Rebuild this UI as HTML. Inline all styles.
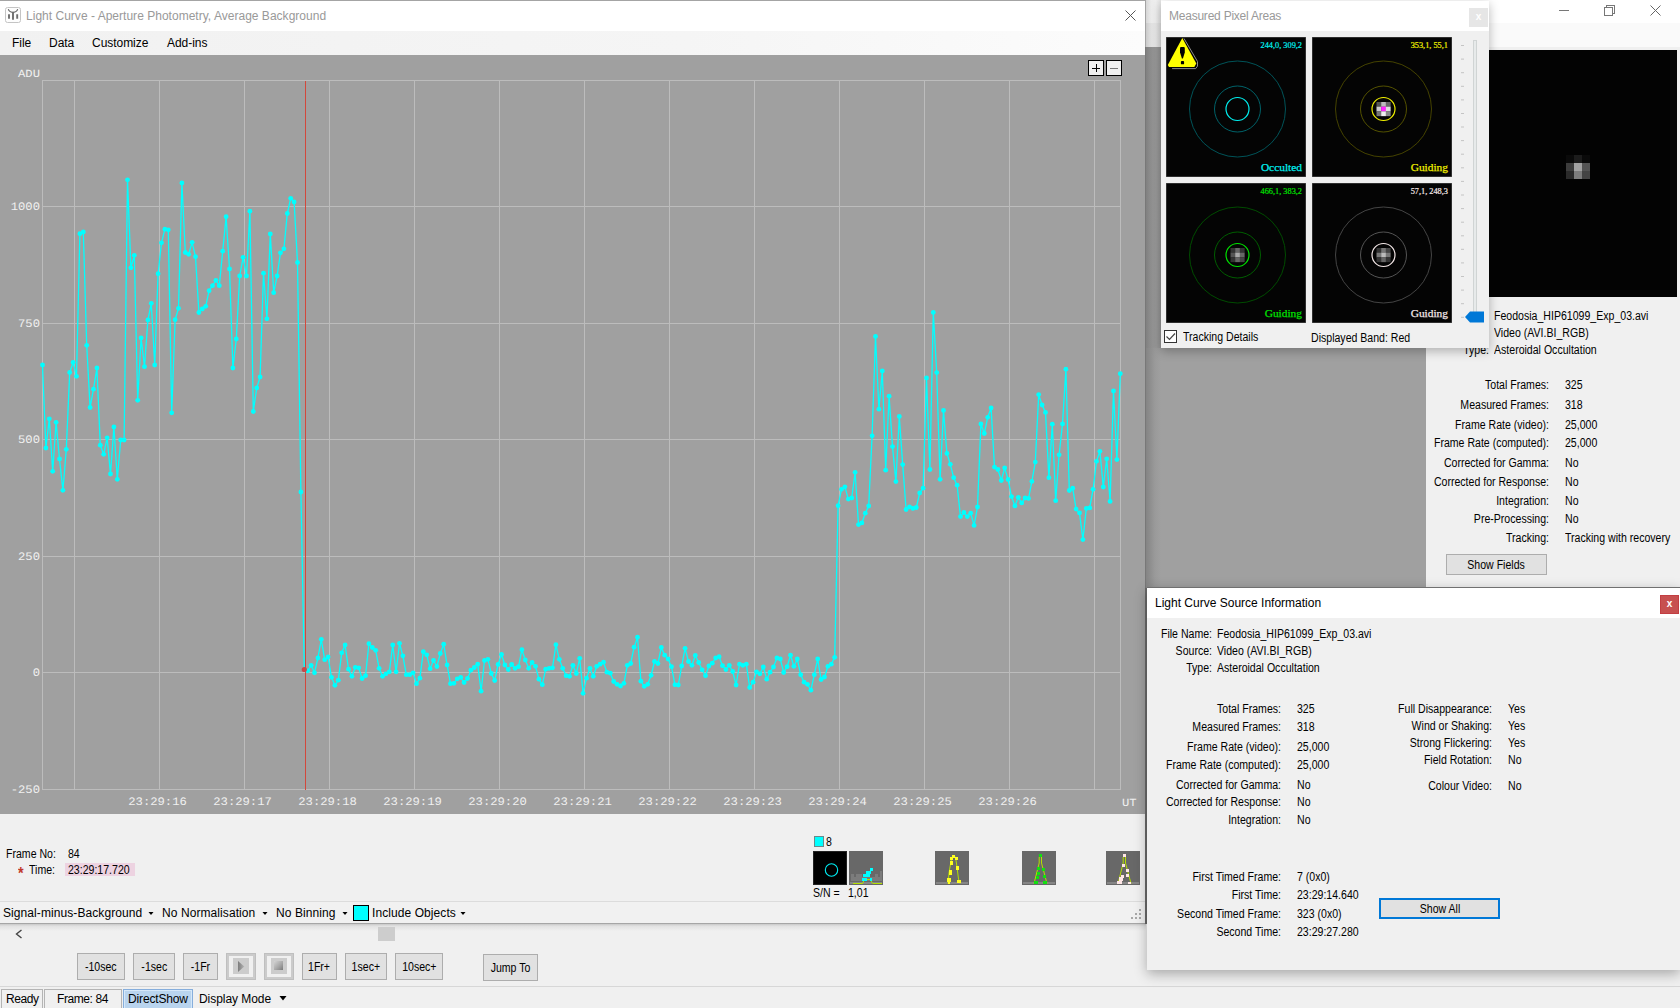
<!DOCTYPE html><html><head><meta charset="utf-8"><title>Light Curve</title><style>
*{box-sizing:border-box;margin:0;padding:0}
html,body{width:1680px;height:1008px;overflow:hidden;background:#f0f0f0}
body{position:relative;font-family:"Liberation Sans",sans-serif;font-size:12.5px;color:#000;line-height:15px}
.a{position:absolute;white-space:nowrap;transform:scaleX(.845);transform-origin:0 0}
.r{position:absolute;white-space:nowrap;text-align:right;transform:scaleX(.845);transform-origin:100% 0}
.ui{font-size:12px;line-height:15px;letter-spacing:-0.15px;transform:none}
.btn span{display:inline-block;transform:scaleX(.845)}
.mono{font-family:"Liberation Mono",monospace;text-rendering:geometricPrecision;font-size:12.2px;line-height:14px;fill:#f0f0f0}
.serif{font-family:"Liberation Serif",serif}
.btn{position:absolute;background:#e1e1e1;border:1px solid #adadad;text-align:center;white-space:nowrap}
.box{position:absolute}
</style></head><body>
<div class="box" style="left:1145px;top:0;width:535px;height:23px;background:#fff"></div>
<div class="box" style="left:1145px;top:23px;width:535px;height:24px;background:#fafafa"></div>
<div class="box" style="left:1145px;top:47px;width:535px;height:3px;background:#f0f0f0"></div>
<div class="box" style="left:1145px;top:47px;width:281px;height:541px;background:#a0a0a0"></div>
<div class="box" style="left:1426px;top:47px;width:254px;height:541px;background:#f0f0f0"></div>
<div class="box" style="left:1489px;top:50px;width:188px;height:247px;background:#030303"></div>
<div class="box" style="left:1566px;top:155px;width:8px;height:8px;background:#0a0a0a"></div>
<div class="box" style="left:1574px;top:155px;width:8px;height:8px;background:#1c1c1c"></div>
<div class="box" style="left:1582px;top:155px;width:8px;height:8px;background:#0a0a0a"></div>
<div class="box" style="left:1566px;top:163px;width:8px;height:8px;background:#3c3c3c"></div>
<div class="box" style="left:1574px;top:163px;width:8px;height:8px;background:#a2a2a2"></div>
<div class="box" style="left:1582px;top:163px;width:8px;height:8px;background:#545454"></div>
<div class="box" style="left:1566px;top:171px;width:8px;height:8px;background:#2a2a2a"></div>
<div class="box" style="left:1574px;top:171px;width:8px;height:8px;background:#7c7c7c"></div>
<div class="box" style="left:1582px;top:171px;width:8px;height:8px;background:#444"></div>
<svg class="box" style="left:1540px;top:0" width="140" height="23" viewBox="0 0 140 23" fill="none" stroke="#777" stroke-width="1" shape-rendering="crispEdges">
<path d="M19 10.5h10"/><path d="M64.5 7.5h8v8h-8z"/><path d="M66.5 7.5v-2h8v8h-2"/></svg>
<svg class="box" style="left:1650px;top:5px" width="11" height="11" viewBox="0 0 11 11" stroke="#666" stroke-width="1"><path d="M0.5 0.5l10 10M10.5 0.5l-10 10"/></svg>
<div class="a" style="left:1494px;top:309px">Feodosia_HIP61099_Exp_03.avi</div>
<div class="a" style="left:1494px;top:326px">Video (AVI.BI_RGB)</div>
<div class="r" style="left:1189px;width:300px;top:343px">Type:</div>
<div class="a" style="left:1494px;top:343px">Asteroidal Occultation</div>
<div class="r" style="left:1249px;width:300px;top:378px">Total Frames:</div>
<div class="a" style="left:1565px;top:378px">325</div>
<div class="r" style="left:1249px;width:300px;top:398px">Measured Frames:</div>
<div class="a" style="left:1565px;top:398px">318</div>
<div class="r" style="left:1249px;width:300px;top:418px">Frame Rate (video):</div>
<div class="a" style="left:1565px;top:418px">25,000</div>
<div class="r" style="left:1249px;width:300px;top:436px">Frame Rate (computed):</div>
<div class="a" style="left:1565px;top:436px">25,000</div>
<div class="r" style="left:1249px;width:300px;top:456px">Corrected for Gamma:</div>
<div class="a" style="left:1565px;top:456px">No</div>
<div class="r" style="left:1249px;width:300px;top:475px">Corrected for Response:</div>
<div class="a" style="left:1565px;top:475px">No</div>
<div class="r" style="left:1249px;width:300px;top:494px">Integration:</div>
<div class="a" style="left:1565px;top:494px">No</div>
<div class="r" style="left:1249px;width:300px;top:512px">Pre-Processing:</div>
<div class="a" style="left:1565px;top:512px">No</div>
<div class="r" style="left:1249px;width:300px;top:531px">Tracking:</div>
<div class="a" style="left:1565px;top:531px">Tracking with recovery</div>
<div class="btn" style="left:1446px;top:554px;width:101px;height:21px;line-height:21px"><span>Show Fields</span></div>
<div class="box" style="left:0;top:923px;width:1680px;height:85px;background:#f0f0f0"></div>
<div class="box" style="left:0;top:923px;width:1146px;height:8px;background:linear-gradient(#bdbdbd,#e2e2e2 40%,#f0f0f0)"></div>
<svg class="box" style="left:15px;top:929px" width="8" height="10" viewBox="0 0 8 10" fill="none" stroke="#444" stroke-width="1.4"><path d="M6.5 1L1.5 5l5 4"/></svg>
<div class="box" style="left:378px;top:927px;width:17px;height:14px;background:#cdcdcd"></div>
<div class="btn" style="left:77px;top:953px;width:48px;height:27px;line-height:27px"><span>-10sec</span></div>
<div class="btn" style="left:133px;top:953px;width:42px;height:27px;line-height:27px"><span>-1sec</span></div>
<div class="btn" style="left:183px;top:953px;width:35px;height:27px;line-height:27px"><span>-1Fr</span></div>
<div class="btn" style="left:226px;top:953px;width:30px;height:27px;line-height:27px"><span></span></div>
<div class="btn" style="left:264px;top:953px;width:30px;height:27px;line-height:27px"><span></span></div>
<div class="btn" style="left:302px;top:953px;width:35px;height:27px;line-height:27px"><span>1Fr+</span></div>
<div class="btn" style="left:345px;top:953px;width:42px;height:27px;line-height:27px"><span>1sec+</span></div>
<div class="btn" style="left:395px;top:953px;width:48px;height:27px;line-height:27px"><span>10sec+</span></div>
<div class="box" style="left:226px;top:953px;width:30px;height:27px;background:#f0f0f0;border:3px solid #cbcbcb;outline:1px solid #bfbfbf;outline-offset:-1px"></div>
<div class="box" style="left:233px;top:958px;width:16px;height:16px;background:#cccccc"></div>
<div class="box" style="left:264px;top:953px;width:30px;height:27px;background:#f0f0f0;border:3px solid #cbcbcb;outline:1px solid #bfbfbf;outline-offset:-1px"></div>
<div class="box" style="left:271px;top:958px;width:16px;height:16px;background:#cccccc"></div>
<svg class="box" style="left:237px;top:960px" width="9" height="13" viewBox="0 0 9 13"><defs><linearGradient id="pg" x1="0" y1="0" x2="1" y2="0"><stop offset="0" stop-color="#7c7c7c"/><stop offset="1" stop-color="#b4b4b4"/></linearGradient></defs><path d="M1 1v11l6.3-5.5z" fill="url(#pg)"/></svg>
<div class="box" style="left:274px;top:961px;width:9px;height:9px;background:linear-gradient(135deg,#d4d4d4,#a8a8a8 55%,#7a7a7a)"></div>
<div class="btn" style="left:483px;top:954px;width:55px;height:27px;line-height:27px"><span>Jump To</span></div>
<div class="box" style="left:0;top:986px;width:1680px;height:1px;background:#d7d7d7"></div>
<div class="box" style="left:1px;top:989px;width:42px;height:19px;border:1px solid #b4b4b4;border-bottom:none"></div>
<div class="a ui" style="left:6px;top:992px;letter-spacing:-0.45px">Ready</div>
<div class="box" style="left:44px;top:989px;width:78px;height:19px;border:1px solid #b4b4b4;border-bottom:none"></div>
<div class="a ui" style="left:57px;top:992px;letter-spacing:-0.42px">Frame: 84</div>
<div class="box" style="left:123px;top:989px;width:70px;height:19px;background:#b9d4ee;border:1px solid #86aedc;border-bottom:none;box-shadow:inset 0 1px 0 #d6e8f9,inset 1px 0 0 #d6e8f9,inset -1px 0 0 #d6e8f9"></div>
<div class="a ui" style="left:128px;top:992px">DirectShow</div>
<div class="a ui" style="left:199px;top:992px;letter-spacing:-0.05px">Display Mode</div>
<svg class="box" style="left:279px;top:996px" width="9" height="5"><path d="M0.5 0h7L4 4.5z" fill="#000"/></svg>
<div class="box" style="left:1146px;top:0;width:15px;height:23px;background:linear-gradient(to right,#d6d6d6,#ececec 35%,#f0f0f0 65%,#e6e6e6)"></div>
<div class="box" style="left:1146px;top:23px;width:15px;height:24px;background:linear-gradient(to right,#cacaca,#e2e2e2 35%,#e8e8e8 65%,#dedede)"></div>
<div class="box" style="left:1146px;top:47px;width:15px;height:301px;background:linear-gradient(to right,#808080,#929292 40%,#989898 70%,#949494)"></div>
<div class="box" style="left:1146px;top:348px;width:15px;height:240px;background:linear-gradient(to right,#848484,#9a9a9a 60%,#a0a0a0)"></div>
<div class="box" style="left:1145px;top:0;width:1px;height:47px;background:#a4a4a4"></div>
<div class="box" style="left:1145px;top:47px;width:1px;height:541px;background:#787878"></div>
<div class="box" style="left:1145px;top:588px;width:2px;height:336px;background:#6a6a6a"></div>
<div class="box" style="left:0;top:0;width:1145px;height:924px;background:#f0f0f0;border-top:1px solid #a4a4a4;border-bottom:1px solid #a6a6a6"></div>
<div class="box" style="left:0;top:1px;width:1145px;height:30px;background:#fff"></div>
<svg class="box" style="left:5px;top:7px" width="16" height="16" viewBox="0 0 16 16"><rect x="0.5" y="0.5" width="15" height="15" rx="2" fill="#fdfdfd" stroke="#c4c4c4"/><path d="M8 4.8v8M4 7.2v4.6M12.2 7.2v4.6" stroke="#6e6e6e" stroke-width="1.9" fill="none"/><path d="M3.3 2.2Q4 5 8 5.6Q12 5 12.7 2.2" stroke="#6e6e6e" stroke-width="1.1" fill="none"/></svg>
<div class="a ui" style="left:26px;top:9px;color:#999;letter-spacing:0.02px">Light Curve - Aperture Photometry, Average Background</div>
<svg class="box" style="left:1125px;top:10px" width="11" height="11" viewBox="0 0 11 11" stroke="#555" stroke-width="1"><path d="M0.5 0.5l10 10M10.5 0.5l-10 10"/></svg>
<div class="box" style="left:0;top:31px;width:1145px;height:24px;background:linear-gradient(to right,#f1f1f1,#f5f5f5 60%,#fcfcfc)"></div>
<div class="a ui" style="left:12px;top:36px;letter-spacing:-0.04px">File</div>
<div class="a ui" style="left:49px;top:36px;letter-spacing:-0.04px">Data</div>
<div class="a ui" style="left:92px;top:36px;letter-spacing:-0.04px">Customize</div>
<div class="a ui" style="left:167px;top:36px;letter-spacing:-0.04px">Add-ins</div>
<svg class="box" style="left:0;top:55px" width="1145" height="759" viewBox="0 55 1145 759"><rect x="0" y="55" width="1145" height="759" fill="#a0a0a0"/><path d="M74.5 80.5V789.5 M159.5 80.5V789.5 M244.5 80.5V789.5 M329.5 80.5V789.5 M414.5 80.5V789.5 M499.5 80.5V789.5 M584.5 80.5V789.5 M669.5 80.5V789.5 M754.5 80.5V789.5 M839.5 80.5V789.5 M924.5 80.5V789.5 M1009.5 80.5V789.5 M1094.5 80.5V789.5 M42.5 206.5H1120.5 M42.5 323H1120.5 M42.5 439.5H1120.5 M42.5 556H1120.5 M42.5 672.5H1120.5 M42.5 80.5H1120.5V789.5H42.5Z" fill="none" stroke="#bcbcbc" stroke-width="1" shape-rendering="crispEdges"/><path d="M305.5 80.5V789.5" stroke="#d2483c" stroke-width="1.3" shape-rendering="crispEdges"/><text class="mono" transform="translate(18,77) scale(1,0.89)" text-anchor="start">ADU</text><text class="mono" transform="translate(40,210.1) scale(1,0.94)" text-anchor="end">1000</text><text class="mono" transform="translate(40,326.6) scale(1,0.94)" text-anchor="end">750</text><text class="mono" transform="translate(40,443.1) scale(1,0.94)" text-anchor="end">500</text><text class="mono" transform="translate(40,559.6) scale(1,0.94)" text-anchor="end">250</text><text class="mono" transform="translate(40,676.1) scale(1,0.94)" text-anchor="end">0</text><text class="mono" transform="translate(40,792.6) scale(1,0.94)" text-anchor="end">-250</text><text class="mono" transform="translate(157.5,805.1) scale(1,0.94)" text-anchor="middle">23:29:16</text><text class="mono" transform="translate(242.5,805.1) scale(1,0.94)" text-anchor="middle">23:29:17</text><text class="mono" transform="translate(327.5,805.1) scale(1,0.94)" text-anchor="middle">23:29:18</text><text class="mono" transform="translate(412.5,805.1) scale(1,0.94)" text-anchor="middle">23:29:19</text><text class="mono" transform="translate(497.5,805.1) scale(1,0.94)" text-anchor="middle">23:29:20</text><text class="mono" transform="translate(582.5,805.1) scale(1,0.94)" text-anchor="middle">23:29:21</text><text class="mono" transform="translate(667.5,805.1) scale(1,0.94)" text-anchor="middle">23:29:22</text><text class="mono" transform="translate(752.5,805.1) scale(1,0.94)" text-anchor="middle">23:29:23</text><text class="mono" transform="translate(837.5,805.1) scale(1,0.94)" text-anchor="middle">23:29:24</text><text class="mono" transform="translate(922.5,805.1) scale(1,0.94)" text-anchor="middle">23:29:25</text><text class="mono" transform="translate(1007.5,805.1) scale(1,0.94)" text-anchor="middle">23:29:26</text><text class="mono" transform="translate(1122,806) scale(1,0.89)" text-anchor="start">UT</text><polyline points="42.5,365.0 45.9,448.0 49.3,418.8 52.7,471.3 56.1,422.3 59.5,459.0 62.9,490.3 66.3,449.3 69.7,372.5 73.1,362.5 76.5,376.3 79.9,233.7 83.3,232.0 86.7,345.3 90.1,407.5 93.5,389.2 96.9,368.0 100.3,445.2 103.7,454.3 107.1,437.8 110.5,474.0 113.9,427.0 117.3,479.3 120.7,440.0 124.1,440.0 127.5,179.8 130.9,267.8 134.3,255.3 137.7,400.3 141.1,338.0 144.5,366.7 147.9,320.0 151.3,303.3 154.7,365.0 158.1,273.7 161.5,242.8 164.9,229.2 168.3,229.8 171.7,412.8 175.1,319.7 178.5,308.3 181.9,183.0 185.3,252.5 188.7,254.3 192.1,242.3 195.5,256.7 198.9,312.5 202.3,309.0 205.7,306.3 209.1,290.7 212.5,285.7 215.9,280.3 219.3,285.7 222.7,251.2 226.1,216.7 229.5,269.0 232.9,368.0 236.3,339.0 239.7,276.0 243.1,257.3 246.5,276.0 249.9,211.2 253.3,411.5 256.7,388.0 260.1,377.0 263.5,273.2 266.9,318.8 270.3,234.0 273.7,292.7 277.1,276.0 280.5,252.8 283.9,248.8 287.3,213.5 290.7,198.3 294.1,202.0 297.5,262.5 300.9,492.0 304.3,669.5 307.7,670.8 311.1,665.3 314.5,672.8 317.9,658.0 321.3,639.3 324.7,659.7 328.1,657.0 331.5,677.3 334.9,685.3 338.3,680.2 341.7,652.8 345.1,645.0 348.5,669.2 351.9,676.3 355.3,667.3 358.7,667.8 362.1,678.5 365.5,675.7 368.9,643.7 372.3,647.5 375.7,650.3 379.1,668.3 382.5,676.3 385.9,673.8 389.3,671.8 392.7,645.0 396.1,671.8 399.5,643.3 402.9,655.8 406.3,674.7 409.7,674.7 413.1,672.8 416.5,683.7 419.9,678.2 423.3,651.7 426.7,654.8 430.1,668.7 433.5,660.5 436.9,666.5 440.3,653.5 443.7,644.2 447.1,665.0 450.5,683.7 453.9,683.3 457.3,678.8 460.7,677.3 464.1,682.5 467.5,678.5 470.9,670.2 474.3,667.5 477.7,664.2 481.1,691.2 484.5,660.5 487.9,659.3 491.3,673.5 494.7,680.5 498.1,664.5 501.5,654.5 504.9,665.0 508.3,669.5 511.7,664.5 515.1,668.3 518.5,666.7 521.9,649.7 525.3,660.0 528.7,668.3 532.1,662.5 535.5,666.3 538.9,679.2 542.3,684.7 545.7,669.2 549.1,668.3 552.5,667.8 555.9,644.7 559.3,659.3 562.7,668.3 566.1,675.7 569.5,676.3 572.9,665.3 576.3,673.5 579.7,658.3 583.1,693.3 586.5,678.2 589.9,668.3 593.3,676.3 596.7,666.3 600.1,664.2 603.5,662.2 606.9,672.2 610.3,673.2 613.7,681.5 617.1,684.3 620.5,686.0 623.9,683.3 627.3,665.3 630.7,663.5 634.1,647.2 637.5,637.2 640.9,681.2 644.3,686.3 647.7,684.3 651.1,675.3 654.5,661.5 657.9,663.5 661.3,647.5 664.7,655.2 668.1,659.0 671.5,666.7 674.9,684.7 678.3,685.0 681.7,666.0 685.1,648.3 688.5,661.5 691.9,665.3 695.3,655.5 698.7,662.5 702.1,669.8 705.5,675.7 708.9,666.0 712.3,663.2 715.7,658.0 719.1,656.7 722.5,665.7 725.9,669.5 729.3,665.3 732.7,671.5 736.1,685.0 739.5,664.2 742.9,665.3 746.3,664.2 749.7,687.5 753.1,682.2 756.5,671.8 759.9,673.8 763.3,667.0 766.7,679.2 770.1,672.2 773.5,667.0 776.9,658.0 780.3,659.0 783.7,672.5 787.1,666.7 790.5,655.2 793.9,666.3 797.3,659.0 800.7,674.7 804.1,682.2 807.5,684.3 810.9,690.2 814.3,674.7 817.7,659.0 821.1,679.5 824.5,677.0 827.9,666.3 831.3,664.2 834.7,657.3 838.1,505.7 841.5,489.3 844.9,486.8 848.3,499.1 851.7,498.0 855.1,472.3 858.5,524.6 861.9,522.9 865.3,513.2 868.7,506.0 872.1,435.8 875.5,336.4 878.9,409.2 882.3,371.0 885.7,470.2 889.1,396.2 892.5,446.6 895.9,481.6 899.3,416.5 902.7,464.6 906.1,509.5 909.5,506.8 912.9,508.4 916.3,507.5 919.7,493.0 923.1,488.2 926.5,378.0 929.9,469.5 933.3,312.4 936.7,372.6 940.1,479.3 943.5,410.5 946.9,453.4 950.3,464.3 953.7,477.7 957.1,485.2 960.5,516.6 963.9,512.5 967.3,516.6 970.7,513.2 974.1,525.4 977.5,507.0 980.9,423.9 984.3,433.5 987.7,417.3 991.1,408.0 994.5,467.1 997.9,469.5 1001.3,480.5 1004.7,467.9 1008.1,479.5 1011.5,496.6 1014.9,505.9 1018.3,497.3 1021.7,502.9 1025.1,498.0 1028.5,498.4 1031.9,481.4 1035.3,462.1 1038.7,394.6 1042.1,405.0 1045.5,412.4 1048.9,477.7 1052.3,424.2 1055.7,500.7 1059.1,454.8 1062.5,423.9 1065.9,369.2 1069.3,490.5 1072.7,488.2 1076.1,509.1 1079.5,512.9 1082.9,539.6 1086.3,508.4 1089.7,507.9 1093.1,489.3 1096.5,461.3 1099.9,451.3 1103.3,487.0 1106.7,458.8 1110.1,501.4 1113.5,391.0 1116.9,459.6 1120.3,373.7" fill="none" stroke="#00ffff" stroke-width="1.3" stroke-linejoin="round"/><g fill="#00ffff"><circle cx="42.5" cy="365.0" r="2.4"/><circle cx="45.9" cy="448.0" r="2.4"/><circle cx="49.3" cy="418.8" r="2.4"/><circle cx="52.7" cy="471.3" r="2.4"/><circle cx="56.1" cy="422.3" r="2.4"/><circle cx="59.5" cy="459.0" r="2.4"/><circle cx="62.9" cy="490.3" r="2.4"/><circle cx="66.3" cy="449.3" r="2.4"/><circle cx="69.7" cy="372.5" r="2.4"/><circle cx="73.1" cy="362.5" r="2.4"/><circle cx="76.5" cy="376.3" r="2.4"/><circle cx="79.9" cy="233.7" r="2.4"/><circle cx="83.3" cy="232.0" r="2.4"/><circle cx="86.7" cy="345.3" r="2.4"/><circle cx="90.1" cy="407.5" r="2.4"/><circle cx="93.5" cy="389.2" r="2.4"/><circle cx="96.9" cy="368.0" r="2.4"/><circle cx="100.3" cy="445.2" r="2.4"/><circle cx="103.7" cy="454.3" r="2.4"/><circle cx="107.1" cy="437.8" r="2.4"/><circle cx="110.5" cy="474.0" r="2.4"/><circle cx="113.9" cy="427.0" r="2.4"/><circle cx="117.3" cy="479.3" r="2.4"/><circle cx="120.7" cy="440.0" r="2.4"/><circle cx="124.1" cy="440.0" r="2.4"/><circle cx="127.5" cy="179.8" r="2.4"/><circle cx="130.9" cy="267.8" r="2.4"/><circle cx="134.3" cy="255.3" r="2.4"/><circle cx="137.7" cy="400.3" r="2.4"/><circle cx="141.1" cy="338.0" r="2.4"/><circle cx="144.5" cy="366.7" r="2.4"/><circle cx="147.9" cy="320.0" r="2.4"/><circle cx="151.3" cy="303.3" r="2.4"/><circle cx="154.7" cy="365.0" r="2.4"/><circle cx="158.1" cy="273.7" r="2.4"/><circle cx="161.5" cy="242.8" r="2.4"/><circle cx="164.9" cy="229.2" r="2.4"/><circle cx="168.3" cy="229.8" r="2.4"/><circle cx="171.7" cy="412.8" r="2.4"/><circle cx="175.1" cy="319.7" r="2.4"/><circle cx="178.5" cy="308.3" r="2.4"/><circle cx="181.9" cy="183.0" r="2.4"/><circle cx="185.3" cy="252.5" r="2.4"/><circle cx="188.7" cy="254.3" r="2.4"/><circle cx="192.1" cy="242.3" r="2.4"/><circle cx="195.5" cy="256.7" r="2.4"/><circle cx="198.9" cy="312.5" r="2.4"/><circle cx="202.3" cy="309.0" r="2.4"/><circle cx="205.7" cy="306.3" r="2.4"/><circle cx="209.1" cy="290.7" r="2.4"/><circle cx="212.5" cy="285.7" r="2.4"/><circle cx="215.9" cy="280.3" r="2.4"/><circle cx="219.3" cy="285.7" r="2.4"/><circle cx="222.7" cy="251.2" r="2.4"/><circle cx="226.1" cy="216.7" r="2.4"/><circle cx="229.5" cy="269.0" r="2.4"/><circle cx="232.9" cy="368.0" r="2.4"/><circle cx="236.3" cy="339.0" r="2.4"/><circle cx="239.7" cy="276.0" r="2.4"/><circle cx="243.1" cy="257.3" r="2.4"/><circle cx="246.5" cy="276.0" r="2.4"/><circle cx="249.9" cy="211.2" r="2.4"/><circle cx="253.3" cy="411.5" r="2.4"/><circle cx="256.7" cy="388.0" r="2.4"/><circle cx="260.1" cy="377.0" r="2.4"/><circle cx="263.5" cy="273.2" r="2.4"/><circle cx="266.9" cy="318.8" r="2.4"/><circle cx="270.3" cy="234.0" r="2.4"/><circle cx="273.7" cy="292.7" r="2.4"/><circle cx="277.1" cy="276.0" r="2.4"/><circle cx="280.5" cy="252.8" r="2.4"/><circle cx="283.9" cy="248.8" r="2.4"/><circle cx="287.3" cy="213.5" r="2.4"/><circle cx="290.7" cy="198.3" r="2.4"/><circle cx="294.1" cy="202.0" r="2.4"/><circle cx="297.5" cy="262.5" r="2.4"/><circle cx="300.9" cy="492.0" r="2.4"/><circle cx="307.7" cy="670.8" r="2.4"/><circle cx="311.1" cy="665.3" r="2.4"/><circle cx="314.5" cy="672.8" r="2.4"/><circle cx="317.9" cy="658.0" r="2.4"/><circle cx="321.3" cy="639.3" r="2.4"/><circle cx="324.7" cy="659.7" r="2.4"/><circle cx="328.1" cy="657.0" r="2.4"/><circle cx="331.5" cy="677.3" r="2.4"/><circle cx="334.9" cy="685.3" r="2.4"/><circle cx="338.3" cy="680.2" r="2.4"/><circle cx="341.7" cy="652.8" r="2.4"/><circle cx="345.1" cy="645.0" r="2.4"/><circle cx="348.5" cy="669.2" r="2.4"/><circle cx="351.9" cy="676.3" r="2.4"/><circle cx="355.3" cy="667.3" r="2.4"/><circle cx="358.7" cy="667.8" r="2.4"/><circle cx="362.1" cy="678.5" r="2.4"/><circle cx="365.5" cy="675.7" r="2.4"/><circle cx="368.9" cy="643.7" r="2.4"/><circle cx="372.3" cy="647.5" r="2.4"/><circle cx="375.7" cy="650.3" r="2.4"/><circle cx="379.1" cy="668.3" r="2.4"/><circle cx="382.5" cy="676.3" r="2.4"/><circle cx="385.9" cy="673.8" r="2.4"/><circle cx="389.3" cy="671.8" r="2.4"/><circle cx="392.7" cy="645.0" r="2.4"/><circle cx="396.1" cy="671.8" r="2.4"/><circle cx="399.5" cy="643.3" r="2.4"/><circle cx="402.9" cy="655.8" r="2.4"/><circle cx="406.3" cy="674.7" r="2.4"/><circle cx="409.7" cy="674.7" r="2.4"/><circle cx="413.1" cy="672.8" r="2.4"/><circle cx="416.5" cy="683.7" r="2.4"/><circle cx="419.9" cy="678.2" r="2.4"/><circle cx="423.3" cy="651.7" r="2.4"/><circle cx="426.7" cy="654.8" r="2.4"/><circle cx="430.1" cy="668.7" r="2.4"/><circle cx="433.5" cy="660.5" r="2.4"/><circle cx="436.9" cy="666.5" r="2.4"/><circle cx="440.3" cy="653.5" r="2.4"/><circle cx="443.7" cy="644.2" r="2.4"/><circle cx="447.1" cy="665.0" r="2.4"/><circle cx="450.5" cy="683.7" r="2.4"/><circle cx="453.9" cy="683.3" r="2.4"/><circle cx="457.3" cy="678.8" r="2.4"/><circle cx="460.7" cy="677.3" r="2.4"/><circle cx="464.1" cy="682.5" r="2.4"/><circle cx="467.5" cy="678.5" r="2.4"/><circle cx="470.9" cy="670.2" r="2.4"/><circle cx="474.3" cy="667.5" r="2.4"/><circle cx="477.7" cy="664.2" r="2.4"/><circle cx="481.1" cy="691.2" r="2.4"/><circle cx="484.5" cy="660.5" r="2.4"/><circle cx="487.9" cy="659.3" r="2.4"/><circle cx="491.3" cy="673.5" r="2.4"/><circle cx="494.7" cy="680.5" r="2.4"/><circle cx="498.1" cy="664.5" r="2.4"/><circle cx="501.5" cy="654.5" r="2.4"/><circle cx="504.9" cy="665.0" r="2.4"/><circle cx="508.3" cy="669.5" r="2.4"/><circle cx="511.7" cy="664.5" r="2.4"/><circle cx="515.1" cy="668.3" r="2.4"/><circle cx="518.5" cy="666.7" r="2.4"/><circle cx="521.9" cy="649.7" r="2.4"/><circle cx="525.3" cy="660.0" r="2.4"/><circle cx="528.7" cy="668.3" r="2.4"/><circle cx="532.1" cy="662.5" r="2.4"/><circle cx="535.5" cy="666.3" r="2.4"/><circle cx="538.9" cy="679.2" r="2.4"/><circle cx="542.3" cy="684.7" r="2.4"/><circle cx="545.7" cy="669.2" r="2.4"/><circle cx="549.1" cy="668.3" r="2.4"/><circle cx="552.5" cy="667.8" r="2.4"/><circle cx="555.9" cy="644.7" r="2.4"/><circle cx="559.3" cy="659.3" r="2.4"/><circle cx="562.7" cy="668.3" r="2.4"/><circle cx="566.1" cy="675.7" r="2.4"/><circle cx="569.5" cy="676.3" r="2.4"/><circle cx="572.9" cy="665.3" r="2.4"/><circle cx="576.3" cy="673.5" r="2.4"/><circle cx="579.7" cy="658.3" r="2.4"/><circle cx="583.1" cy="693.3" r="2.4"/><circle cx="586.5" cy="678.2" r="2.4"/><circle cx="589.9" cy="668.3" r="2.4"/><circle cx="593.3" cy="676.3" r="2.4"/><circle cx="596.7" cy="666.3" r="2.4"/><circle cx="600.1" cy="664.2" r="2.4"/><circle cx="603.5" cy="662.2" r="2.4"/><circle cx="606.9" cy="672.2" r="2.4"/><circle cx="610.3" cy="673.2" r="2.4"/><circle cx="613.7" cy="681.5" r="2.4"/><circle cx="617.1" cy="684.3" r="2.4"/><circle cx="620.5" cy="686.0" r="2.4"/><circle cx="623.9" cy="683.3" r="2.4"/><circle cx="627.3" cy="665.3" r="2.4"/><circle cx="630.7" cy="663.5" r="2.4"/><circle cx="634.1" cy="647.2" r="2.4"/><circle cx="637.5" cy="637.2" r="2.4"/><circle cx="640.9" cy="681.2" r="2.4"/><circle cx="644.3" cy="686.3" r="2.4"/><circle cx="647.7" cy="684.3" r="2.4"/><circle cx="651.1" cy="675.3" r="2.4"/><circle cx="654.5" cy="661.5" r="2.4"/><circle cx="657.9" cy="663.5" r="2.4"/><circle cx="661.3" cy="647.5" r="2.4"/><circle cx="664.7" cy="655.2" r="2.4"/><circle cx="668.1" cy="659.0" r="2.4"/><circle cx="671.5" cy="666.7" r="2.4"/><circle cx="674.9" cy="684.7" r="2.4"/><circle cx="678.3" cy="685.0" r="2.4"/><circle cx="681.7" cy="666.0" r="2.4"/><circle cx="685.1" cy="648.3" r="2.4"/><circle cx="688.5" cy="661.5" r="2.4"/><circle cx="691.9" cy="665.3" r="2.4"/><circle cx="695.3" cy="655.5" r="2.4"/><circle cx="698.7" cy="662.5" r="2.4"/><circle cx="702.1" cy="669.8" r="2.4"/><circle cx="705.5" cy="675.7" r="2.4"/><circle cx="708.9" cy="666.0" r="2.4"/><circle cx="712.3" cy="663.2" r="2.4"/><circle cx="715.7" cy="658.0" r="2.4"/><circle cx="719.1" cy="656.7" r="2.4"/><circle cx="722.5" cy="665.7" r="2.4"/><circle cx="725.9" cy="669.5" r="2.4"/><circle cx="729.3" cy="665.3" r="2.4"/><circle cx="732.7" cy="671.5" r="2.4"/><circle cx="736.1" cy="685.0" r="2.4"/><circle cx="739.5" cy="664.2" r="2.4"/><circle cx="742.9" cy="665.3" r="2.4"/><circle cx="746.3" cy="664.2" r="2.4"/><circle cx="749.7" cy="687.5" r="2.4"/><circle cx="753.1" cy="682.2" r="2.4"/><circle cx="756.5" cy="671.8" r="2.4"/><circle cx="759.9" cy="673.8" r="2.4"/><circle cx="763.3" cy="667.0" r="2.4"/><circle cx="766.7" cy="679.2" r="2.4"/><circle cx="770.1" cy="672.2" r="2.4"/><circle cx="773.5" cy="667.0" r="2.4"/><circle cx="776.9" cy="658.0" r="2.4"/><circle cx="780.3" cy="659.0" r="2.4"/><circle cx="783.7" cy="672.5" r="2.4"/><circle cx="787.1" cy="666.7" r="2.4"/><circle cx="790.5" cy="655.2" r="2.4"/><circle cx="793.9" cy="666.3" r="2.4"/><circle cx="797.3" cy="659.0" r="2.4"/><circle cx="800.7" cy="674.7" r="2.4"/><circle cx="804.1" cy="682.2" r="2.4"/><circle cx="807.5" cy="684.3" r="2.4"/><circle cx="810.9" cy="690.2" r="2.4"/><circle cx="814.3" cy="674.7" r="2.4"/><circle cx="817.7" cy="659.0" r="2.4"/><circle cx="821.1" cy="679.5" r="2.4"/><circle cx="824.5" cy="677.0" r="2.4"/><circle cx="827.9" cy="666.3" r="2.4"/><circle cx="831.3" cy="664.2" r="2.4"/><circle cx="834.7" cy="657.3" r="2.4"/><circle cx="838.1" cy="505.7" r="2.4"/><circle cx="841.5" cy="489.3" r="2.4"/><circle cx="844.9" cy="486.8" r="2.4"/><circle cx="848.3" cy="499.1" r="2.4"/><circle cx="851.7" cy="498.0" r="2.4"/><circle cx="855.1" cy="472.3" r="2.4"/><circle cx="858.5" cy="524.6" r="2.4"/><circle cx="861.9" cy="522.9" r="2.4"/><circle cx="865.3" cy="513.2" r="2.4"/><circle cx="868.7" cy="506.0" r="2.4"/><circle cx="872.1" cy="435.8" r="2.4"/><circle cx="875.5" cy="336.4" r="2.4"/><circle cx="878.9" cy="409.2" r="2.4"/><circle cx="882.3" cy="371.0" r="2.4"/><circle cx="885.7" cy="470.2" r="2.4"/><circle cx="889.1" cy="396.2" r="2.4"/><circle cx="892.5" cy="446.6" r="2.4"/><circle cx="895.9" cy="481.6" r="2.4"/><circle cx="899.3" cy="416.5" r="2.4"/><circle cx="902.7" cy="464.6" r="2.4"/><circle cx="906.1" cy="509.5" r="2.4"/><circle cx="909.5" cy="506.8" r="2.4"/><circle cx="912.9" cy="508.4" r="2.4"/><circle cx="916.3" cy="507.5" r="2.4"/><circle cx="919.7" cy="493.0" r="2.4"/><circle cx="923.1" cy="488.2" r="2.4"/><circle cx="926.5" cy="378.0" r="2.4"/><circle cx="929.9" cy="469.5" r="2.4"/><circle cx="933.3" cy="312.4" r="2.4"/><circle cx="936.7" cy="372.6" r="2.4"/><circle cx="940.1" cy="479.3" r="2.4"/><circle cx="943.5" cy="410.5" r="2.4"/><circle cx="946.9" cy="453.4" r="2.4"/><circle cx="950.3" cy="464.3" r="2.4"/><circle cx="953.7" cy="477.7" r="2.4"/><circle cx="957.1" cy="485.2" r="2.4"/><circle cx="960.5" cy="516.6" r="2.4"/><circle cx="963.9" cy="512.5" r="2.4"/><circle cx="967.3" cy="516.6" r="2.4"/><circle cx="970.7" cy="513.2" r="2.4"/><circle cx="974.1" cy="525.4" r="2.4"/><circle cx="977.5" cy="507.0" r="2.4"/><circle cx="980.9" cy="423.9" r="2.4"/><circle cx="984.3" cy="433.5" r="2.4"/><circle cx="987.7" cy="417.3" r="2.4"/><circle cx="991.1" cy="408.0" r="2.4"/><circle cx="994.5" cy="467.1" r="2.4"/><circle cx="997.9" cy="469.5" r="2.4"/><circle cx="1001.3" cy="480.5" r="2.4"/><circle cx="1004.7" cy="467.9" r="2.4"/><circle cx="1008.1" cy="479.5" r="2.4"/><circle cx="1011.5" cy="496.6" r="2.4"/><circle cx="1014.9" cy="505.9" r="2.4"/><circle cx="1018.3" cy="497.3" r="2.4"/><circle cx="1021.7" cy="502.9" r="2.4"/><circle cx="1025.1" cy="498.0" r="2.4"/><circle cx="1028.5" cy="498.4" r="2.4"/><circle cx="1031.9" cy="481.4" r="2.4"/><circle cx="1035.3" cy="462.1" r="2.4"/><circle cx="1038.7" cy="394.6" r="2.4"/><circle cx="1042.1" cy="405.0" r="2.4"/><circle cx="1045.5" cy="412.4" r="2.4"/><circle cx="1048.9" cy="477.7" r="2.4"/><circle cx="1052.3" cy="424.2" r="2.4"/><circle cx="1055.7" cy="500.7" r="2.4"/><circle cx="1059.1" cy="454.8" r="2.4"/><circle cx="1062.5" cy="423.9" r="2.4"/><circle cx="1065.9" cy="369.2" r="2.4"/><circle cx="1069.3" cy="490.5" r="2.4"/><circle cx="1072.7" cy="488.2" r="2.4"/><circle cx="1076.1" cy="509.1" r="2.4"/><circle cx="1079.5" cy="512.9" r="2.4"/><circle cx="1082.9" cy="539.6" r="2.4"/><circle cx="1086.3" cy="508.4" r="2.4"/><circle cx="1089.7" cy="507.9" r="2.4"/><circle cx="1093.1" cy="489.3" r="2.4"/><circle cx="1096.5" cy="461.3" r="2.4"/><circle cx="1099.9" cy="451.3" r="2.4"/><circle cx="1103.3" cy="487.0" r="2.4"/><circle cx="1106.7" cy="458.8" r="2.4"/><circle cx="1110.1" cy="501.4" r="2.4"/><circle cx="1113.5" cy="391.0" r="2.4"/><circle cx="1116.9" cy="459.6" r="2.4"/><circle cx="1120.3" cy="373.7" r="2.4"/></g><circle cx="304.3" cy="669.5" r="2.6" fill="#c8484a"/></svg>
<div class="box" style="left:1088px;top:60px;width:16px;height:16px;background:#f0f0f0;border:1px solid #000"></div>
<div class="box" style="left:1106px;top:60px;width:16px;height:16px;background:#f0f0f0;border:1px solid #000"></div>
<svg class="box" style="left:1088px;top:60px" width="34" height="16" shape-rendering="crispEdges"><path d="M4 8.5h8M8.5 4v8" stroke="#000" stroke-width="1.2"/><path d="M22 8.5h8" stroke="#777" stroke-width="1"/></svg>
<div class="a" style="left:6px;top:847px">Frame No:</div><div class="a" style="left:68px;top:847px">84</div>
<div class="a" style="left:18px;top:866px;color:#c0392b;font-size:17px;font-weight:bold">&#42;</div><div class="a" style="left:29px;top:863px">Time:</div>
<div class="box" style="left:65px;top:863px;width:70px;height:13px;background:#edd3e1"></div><div class="a" style="left:68px;top:863px">23:29:17.720</div>
<div class="box" style="left:814px;top:836px;width:10px;height:11px;background:#00ffff;border:1px solid #6a8a8a"></div><div class="a" style="left:826px;top:835px">8</div>
<div class="box" style="left:813px;top:851px;width:34px;height:34px;background:#000;border:1px solid #222"></div>
<svg class="box" style="left:813px;top:851px" width="34" height="34"><circle cx="18.5" cy="19" r="6.2" fill="none" stroke="#00eef4" stroke-width="1.1"/></svg>
<svg class="box" style="left:849px;top:851px" width="34" height="34" viewBox="0 0 34 34" shape-rendering="crispEdges"><rect width="34" height="34" fill="#686868"/><rect x="1" y="31" width="32" height="1.6" fill="#858585"/><rect x="2" y="26.3" width="31" height="3.6" fill="#7c7c7c"/><rect x="2" y="22.8" width="2.5" height="3" fill="#7c7c7c"/><rect x="7" y="22.8" width="6" height="3" fill="#7c7c7c"/><rect x="26" y="22.8" width="3" height="3" fill="#7c7c7c"/><rect x="31" y="19.7" width="1.6" height="6" fill="#7c7c7c"/><path d="M4 32.5H13.7L15 29L16 28.5H21.5L22.6 31L23.8 32.5H33" fill="none" stroke="#b4e000" stroke-width="1" shape-rendering="auto"/><rect x="20.7" y="16.7" width="3.6" height="3.0" fill="#00ffff"/><rect x="16.7" y="19.7" width="5.1" height="3.6" fill="#00ffff"/><rect x="14.2" y="22.8" width="6.5" height="3.0" fill="#00ffff"/><rect x="13.2" y="26.8" width="5.0" height="3.1" fill="#00ffff"/><rect x="20.7" y="26.8" width="2.6" height="3.1" fill="#00ffff"/></svg>
<svg class="box" style="left:935px;top:851px" width="34" height="34" viewBox="0 0 34 34" shape-rendering="crispEdges"><rect width="34" height="34" fill="#686868"/><rect x="1" y="31" width="32" height="1.6" fill="#858585"/><path d="M13 32.5L14 22L16 10L18 5L20.5 6L22 16L23.5 28L25 32.5" fill="none" stroke="#b4e000" stroke-width="1" shape-rendering="auto"/><rect x="16.7" y="3.5" width="3.5" height="3.1" fill="#ffff20"/><rect x="14.7" y="5.6" width="3.0" height="3.5" fill="#ffff20"/><rect x="19.7" y="5.6" width="3.3" height="3.5" fill="#ffff20"/><rect x="14.7" y="9.6" width="3.5" height="4.1" fill="#ffff20"/><rect x="20.7" y="14.7" width="3.6" height="4.0" fill="#ffff20"/><rect x="13.7" y="18.7" width="3.5" height="5.1" fill="#ffff20"/><rect x="12.1" y="26.8" width="4.1" height="4.1" fill="#ffff20"/><rect x="12.6" y="30.4" width="2.6" height="2.5" fill="#ffff20"/><rect x="22.3" y="29.4" width="3.5" height="3.0" fill="#ffff20"/></svg>
<svg class="box" style="left:1022px;top:851px" width="34" height="34" viewBox="0 0 34 34" shape-rendering="crispEdges"><rect width="34" height="34" fill="#686868"/><rect x="1" y="31" width="32" height="1.6" fill="#858585"/><path d="M12 32.5L17.2 12V6M25 32.5L19.5 12V6" fill="none" stroke="#b4e000" stroke-width="1" shape-rendering="auto"/><rect x="16.9" y="3.1" width="3.1" height="2.9" fill="#10e010"/><rect x="15" y="16" width="2.9" height="2.9" fill="#10e010"/><rect x="20" y="16.8" width="2.9" height="3.4" fill="#10e010"/><rect x="15" y="21" width="2.9" height="2.9" fill="#10e010"/><rect x="20.8" y="23.9" width="2.9" height="3.4" fill="#10e010"/><rect x="13.75" y="25.2" width="3.1" height="2.9" fill="#10e010"/><rect x="11.7" y="29.75" width="4.1" height="3.0" fill="#10e010"/><rect x="20.8" y="29.75" width="4.6" height="3.0" fill="#10e010"/></svg>
<svg class="box" style="left:1106px;top:851px" width="34" height="34" viewBox="0 0 34 34" shape-rendering="crispEdges"><rect width="34" height="34" fill="#686868"/><rect x="1" y="31" width="32" height="1.6" fill="#858585"/><path d="M12 32.5L17.2 12V6M25 32.5L19.5 12V6" fill="none" stroke="#b4e000" stroke-width="1" shape-rendering="auto"/><rect x="16.8" y="3.1" width="3.1" height="2.9" fill="#ffe6e6"/><rect x="16" y="13.1" width="2.9" height="2.9" fill="#ffe6e6"/><rect x="19.9" y="17.9" width="3.0" height="3.1" fill="#ffe6e6"/><rect x="19.9" y="22.9" width="3.0" height="3.1" fill="#ffe6e6"/><rect x="14.75" y="23.5" width="2.9" height="3.1" fill="#ffe6e6"/><rect x="13" y="26.4" width="3.5" height="3.8" fill="#ffe6e6"/><rect x="11" y="30" width="5.0" height="2.7" fill="#ffe6e6"/><rect x="21.8" y="30.6" width="3.4" height="2.1" fill="#ffe6e6"/></svg>
<div class="a" style="left:813px;top:886px">S/N =</div><div class="a" style="left:848px;top:886px">1,01</div>
<div class="box" style="left:0;top:901px;width:1145px;height:1px;background:#dcdcdc"></div>
<div class="box" style="left:0;top:902px;width:1145px;height:21px;background:#f1f1f1"></div>
<div class="a ui" style="left:3px;top:906px;letter-spacing:0.08px">Signal-minus-Background</div>
<svg class="box" style="left:148px;top:912px" width="6" height="3"><path d="M0.5 0h5L3 3z" fill="#000"/></svg>
<div class="a ui" style="left:162px;top:906px;letter-spacing:0.08px">No Normalisation</div>
<svg class="box" style="left:262px;top:912px" width="6" height="3"><path d="M0.5 0h5L3 3z" fill="#000"/></svg>
<div class="a ui" style="left:276px;top:906px;letter-spacing:0.08px">No Binning</div>
<svg class="box" style="left:342px;top:912px" width="6" height="3"><path d="M0.5 0h5L3 3z" fill="#000"/></svg>
<div class="box" style="left:353px;top:905px;width:16px;height:16px;background:#00ffff;border:1px solid #000"></div>
<div class="a ui" style="left:372px;top:906px;letter-spacing:0.08px">Include Objects</div>
<svg class="box" style="left:460px;top:912px" width="6" height="3"><path d="M0.5 0h5L3 3z" fill="#000"/></svg>
<svg class="box" style="left:1130px;top:908px" width="13" height="13" fill="#a8a8a8"><rect x="9" y="1" width="2" height="2"/><rect x="5" y="5" width="2" height="2"/><rect x="9" y="5" width="2" height="2"/><rect x="1" y="9" width="2" height="2"/><rect x="5" y="9" width="2" height="2"/><rect x="9" y="9" width="2" height="2"/></svg>
<div class="box" style="left:1161px;top:1px;width:328px;height:347px;background:#f0f0f0;box-shadow:0 3px 10px rgba(0,0,0,.28)"></div>
<div class="box" style="left:1161px;top:1px;width:328px;height:30px;background:#fff"></div>
<div class="a ui" style="left:1169px;top:9px;color:#999;letter-spacing:-0.23px">Measured Pixel Areas</div>
<div class="box" style="left:1469px;top:8px;width:19px;height:19px;background:#e6e6e6"></div>
<div class="box" style="left:1469px;top:8px;width:19px;height:19px;line-height:17px;text-align:center;color:#fff;font-size:10px;font-weight:bold">x</div>
<svg class="box" style="left:1166px;top:37px" width="140" height="140" viewBox="0 0 140 140"><rect width="140" height="140" fill="#040404" stroke="#5a5a5a" stroke-width="1"/><circle cx="71.5" cy="72" r="48" fill="none" stroke="#005c62" stroke-width="0.9"/><circle cx="71.5" cy="72" r="23" fill="none" stroke="#006c74" stroke-width="0.9"/><circle cx="71.5" cy="72" r="11.5" fill="none" stroke="#00f0f0" stroke-width="1.2"/><text x="136" y="11" text-anchor="end" font-family="Liberation Serif,serif" font-size="8.3" stroke="#00f0f0" stroke-width="0.2" fill="#00f0f0">244,0, 309,2</text><text x="136" y="134" text-anchor="end" font-family="Liberation Serif,serif" font-size="11.4" stroke="#00f0f0" stroke-width="0.25" fill="#00f0f0">Occulted</text><path d="M18 1.5L31.5 24.5V29.1L29.7 31.6H6.1" fill="none" stroke="#8c8c8c" stroke-width="1"/><path d="M16.3 1L1.8 28L3 29.9H28.3L30.3 26.5Z" fill="#ffff00"/><path d="M14 11.5Q14 10.1 15 10.1H17.8Q18.8 10.1 18.8 11.5V15.5L16.9 21.6H15.9L14 15.5Z" fill="#000"/><rect x="14.9" y="24" width="3.2" height="3.3" rx="0.9" fill="#000"/></svg>
<svg class="box" style="left:1312px;top:37px" width="140" height="140" viewBox="0 0 140 140"><rect width="140" height="140" fill="#040404" stroke="#5a5a5a" stroke-width="1"/><rect x="64.50" y="65.00" width="4.8" height="4.8" fill="#555"/><rect x="69.17" y="65.00" width="4.8" height="4.8" fill="#bbb"/><rect x="73.84" y="65.00" width="4.8" height="4.8" fill="#666"/><rect x="64.50" y="69.67" width="4.8" height="4.8" fill="#ccc"/><rect x="69.17" y="69.67" width="4.8" height="4.8" fill="#ff20ff"/><rect x="73.84" y="69.67" width="4.8" height="4.8" fill="#ddd"/><rect x="64.50" y="74.34" width="4.8" height="4.8" fill="#777"/><rect x="69.17" y="74.34" width="4.8" height="4.8" fill="#eee"/><rect x="73.84" y="74.34" width="4.8" height="4.8" fill="#888"/><circle cx="71.5" cy="72" r="48" fill="none" stroke="#4c4a00" stroke-width="0.9"/><circle cx="71.5" cy="72" r="23" fill="none" stroke="#5c5a00" stroke-width="0.9"/><circle cx="71.5" cy="72" r="11.5" fill="none" stroke="#f0f000" stroke-width="1.2"/><text x="136" y="11" text-anchor="end" font-family="Liberation Serif,serif" font-size="8.3" stroke="#f0f000" stroke-width="0.2" fill="#f0f000">353,1, 55,1</text><text x="136" y="134" text-anchor="end" font-family="Liberation Serif,serif" font-size="11.4" stroke="#f0f000" stroke-width="0.25" fill="#f0f000">Guiding</text></svg>
<svg class="box" style="left:1166px;top:183px" width="140" height="140" viewBox="0 0 140 140"><rect width="140" height="140" fill="#040404" stroke="#5a5a5a" stroke-width="1"/><rect x="64.50" y="65.00" width="4.8" height="4.8" fill="#333"/><rect x="69.17" y="65.00" width="4.8" height="4.8" fill="#666"/><rect x="73.84" y="65.00" width="4.8" height="4.8" fill="#333"/><rect x="64.50" y="69.67" width="4.8" height="4.8" fill="#555"/><rect x="69.17" y="69.67" width="4.8" height="4.8" fill="#aaa"/><rect x="73.84" y="69.67" width="4.8" height="4.8" fill="#666"/><rect x="64.50" y="74.34" width="4.8" height="4.8" fill="#333"/><rect x="69.17" y="74.34" width="4.8" height="4.8" fill="#666"/><rect x="73.84" y="74.34" width="4.8" height="4.8" fill="#444"/><circle cx="71.5" cy="72" r="48" fill="none" stroke="#005400" stroke-width="0.9"/><circle cx="71.5" cy="72" r="23" fill="none" stroke="#006800" stroke-width="0.9"/><circle cx="71.5" cy="72" r="11.5" fill="none" stroke="#00e000" stroke-width="1.2"/><text x="136" y="11" text-anchor="end" font-family="Liberation Serif,serif" font-size="8.3" stroke="#00e000" stroke-width="0.2" fill="#00e000">466,1, 383,2</text><text x="136" y="134" text-anchor="end" font-family="Liberation Serif,serif" font-size="11.4" stroke="#00e000" stroke-width="0.25" fill="#00e000">Guiding</text></svg>
<svg class="box" style="left:1312px;top:183px" width="140" height="140" viewBox="0 0 140 140"><rect width="140" height="140" fill="#040404" stroke="#5a5a5a" stroke-width="1"/><rect x="64.50" y="65.00" width="4.8" height="4.8" fill="#333"/><rect x="69.17" y="65.00" width="4.8" height="4.8" fill="#777"/><rect x="73.84" y="65.00" width="4.8" height="4.8" fill="#444"/><rect x="64.50" y="69.67" width="4.8" height="4.8" fill="#777"/><rect x="69.17" y="69.67" width="4.8" height="4.8" fill="#bbb"/><rect x="73.84" y="69.67" width="4.8" height="4.8" fill="#777"/><rect x="64.50" y="74.34" width="4.8" height="4.8" fill="#333"/><rect x="69.17" y="74.34" width="4.8" height="4.8" fill="#666"/><rect x="73.84" y="74.34" width="4.8" height="4.8" fill="#333"/><circle cx="71.5" cy="72" r="48" fill="none" stroke="#4c4c4c" stroke-width="0.9"/><circle cx="71.5" cy="72" r="23" fill="none" stroke="#5c5c5c" stroke-width="0.9"/><circle cx="71.5" cy="72" r="11.5" fill="none" stroke="#f4e8e8" stroke-width="1.2"/><text x="136" y="11" text-anchor="end" font-family="Liberation Serif,serif" font-size="8.3" stroke="#f4e8e8" stroke-width="0.2" fill="#f4e8e8">57,1, 248,3</text><text x="136" y="134" text-anchor="end" font-family="Liberation Serif,serif" font-size="11.4" stroke="#f4e8e8" stroke-width="0.25" fill="#f4e8e8">Guiding</text></svg>
<svg class="box" style="left:1460px;top:45px" width="6" height="280"><rect x="1" y="0.0" width="3" height="1" fill="#c4c4c4"/><rect x="1" y="13.6" width="3" height="1" fill="#c4c4c4"/><rect x="1" y="27.2" width="3" height="1" fill="#c4c4c4"/><rect x="1" y="40.8" width="3" height="1" fill="#c4c4c4"/><rect x="1" y="54.4" width="3" height="1" fill="#c4c4c4"/><rect x="1" y="68.0" width="3" height="1" fill="#c4c4c4"/><rect x="1" y="81.5" width="3" height="1" fill="#c4c4c4"/><rect x="1" y="95.1" width="3" height="1" fill="#c4c4c4"/><rect x="1" y="108.7" width="3" height="1" fill="#c4c4c4"/><rect x="1" y="122.3" width="3" height="1" fill="#c4c4c4"/><rect x="1" y="135.9" width="3" height="1" fill="#c4c4c4"/><rect x="1" y="149.5" width="3" height="1" fill="#c4c4c4"/><rect x="1" y="163.1" width="3" height="1" fill="#c4c4c4"/><rect x="1" y="176.7" width="3" height="1" fill="#c4c4c4"/><rect x="1" y="190.3" width="3" height="1" fill="#c4c4c4"/><rect x="1" y="203.8" width="3" height="1" fill="#c4c4c4"/><rect x="1" y="217.4" width="3" height="1" fill="#c4c4c4"/><rect x="1" y="231.0" width="3" height="1" fill="#c4c4c4"/><rect x="1" y="244.6" width="3" height="1" fill="#c4c4c4"/><rect x="1" y="258.2" width="3" height="1" fill="#c4c4c4"/><rect x="1" y="271.8" width="3" height="1" fill="#c4c4c4"/></svg>
<div class="box" style="left:1473px;top:40px;width:4px;height:275px;background:#e7eaea;border:1px solid #d0d4d4"></div>
<svg class="box" style="left:1464px;top:310px" width="22" height="14"><path d="M1 7L6 1.5H20V12.5H6Z" fill="#0078d7"/></svg>
<div class="box" style="left:1164px;top:330px;width:13px;height:13px;background:#fff;border:1px solid #333"></div>
<svg class="box" style="left:1164px;top:330px" width="13" height="13" fill="none" stroke="#444" stroke-width="1.2"><path d="M2.5 6.5l3 3 5.5-6"/></svg>
<div class="a" style="left:1183px;top:330px">Tracking Details</div>
<div class="a" style="left:1311px;top:331px">Displayed Band: Red</div>
<div class="box" style="left:1147px;top:587px;width:533px;height:383px;background:#f0f0f0;box-shadow:0 4px 12px rgba(0,0,0,.3);border-top:1px solid #707070"></div>
<div class="box" style="left:1147px;top:588px;width:533px;height:30px;background:#fff"></div>
<div class="a ui" style="left:1155px;top:596px;letter-spacing:0px">Light Curve Source Information</div>
<div class="box" style="left:1660px;top:595px;width:19px;height:19px;background:#c75050;border:1px solid #c23e42"></div>
<div class="box" style="left:1660px;top:595px;width:19px;height:19px;line-height:17px;text-align:center;color:#fff;font-size:10px;font-weight:bold">x</div>
<div class="r" style="left:912px;width:300px;top:627px">File Name:</div>
<div class="a" style="left:1217px;top:627px">Feodosia_HIP61099_Exp_03.avi</div>
<div class="r" style="left:912px;width:300px;top:644px">Source:</div>
<div class="a" style="left:1217px;top:644px">Video (AVI.BI_RGB)</div>
<div class="r" style="left:912px;width:300px;top:661px">Type:</div>
<div class="a" style="left:1217px;top:661px">Asteroidal Occultation</div>
<div class="r" style="left:981px;width:300px;top:702px">Total Frames:</div>
<div class="a" style="left:1297px;top:702px">325</div>
<div class="r" style="left:981px;width:300px;top:720px">Measured Frames:</div>
<div class="a" style="left:1297px;top:720px">318</div>
<div class="r" style="left:981px;width:300px;top:740px">Frame Rate (video):</div>
<div class="a" style="left:1297px;top:740px">25,000</div>
<div class="r" style="left:981px;width:300px;top:758px">Frame Rate (computed):</div>
<div class="a" style="left:1297px;top:758px">25,000</div>
<div class="r" style="left:981px;width:300px;top:778px">Corrected for Gamma:</div>
<div class="a" style="left:1297px;top:778px">No</div>
<div class="r" style="left:981px;width:300px;top:795px">Corrected for Response:</div>
<div class="a" style="left:1297px;top:795px">No</div>
<div class="r" style="left:981px;width:300px;top:813px">Integration:</div>
<div class="a" style="left:1297px;top:813px">No</div>
<div class="r" style="left:981px;width:300px;top:870px">First Timed Frame:</div>
<div class="a" style="left:1297px;top:870px">7 (0x0)</div>
<div class="r" style="left:981px;width:300px;top:888px">First Time:</div>
<div class="a" style="left:1297px;top:888px">23:29:14.640</div>
<div class="r" style="left:981px;width:300px;top:907px">Second Timed Frame:</div>
<div class="a" style="left:1297px;top:907px">323 (0x0)</div>
<div class="r" style="left:981px;width:300px;top:925px">Second Time:</div>
<div class="a" style="left:1297px;top:925px">23:29:27.280</div>
<div class="r" style="left:1192px;width:300px;top:702px">Full Disappearance:</div>
<div class="a" style="left:1508px;top:702px">Yes</div>
<div class="r" style="left:1192px;width:300px;top:719px">Wind or Shaking:</div>
<div class="a" style="left:1508px;top:719px">Yes</div>
<div class="r" style="left:1192px;width:300px;top:736px">Strong Flickering:</div>
<div class="a" style="left:1508px;top:736px">Yes</div>
<div class="r" style="left:1192px;width:300px;top:753px">Field Rotation:</div>
<div class="a" style="left:1508px;top:753px">No</div>
<div class="r" style="left:1192px;width:300px;top:779px">Colour Video:</div>
<div class="a" style="left:1508px;top:779px">No</div>
<div class="btn" style="left:1379px;top:898px;width:121px;height:21px;line-height:19px;border:2px solid #0078d7"><span>Show All</span></div>
</body></html>
